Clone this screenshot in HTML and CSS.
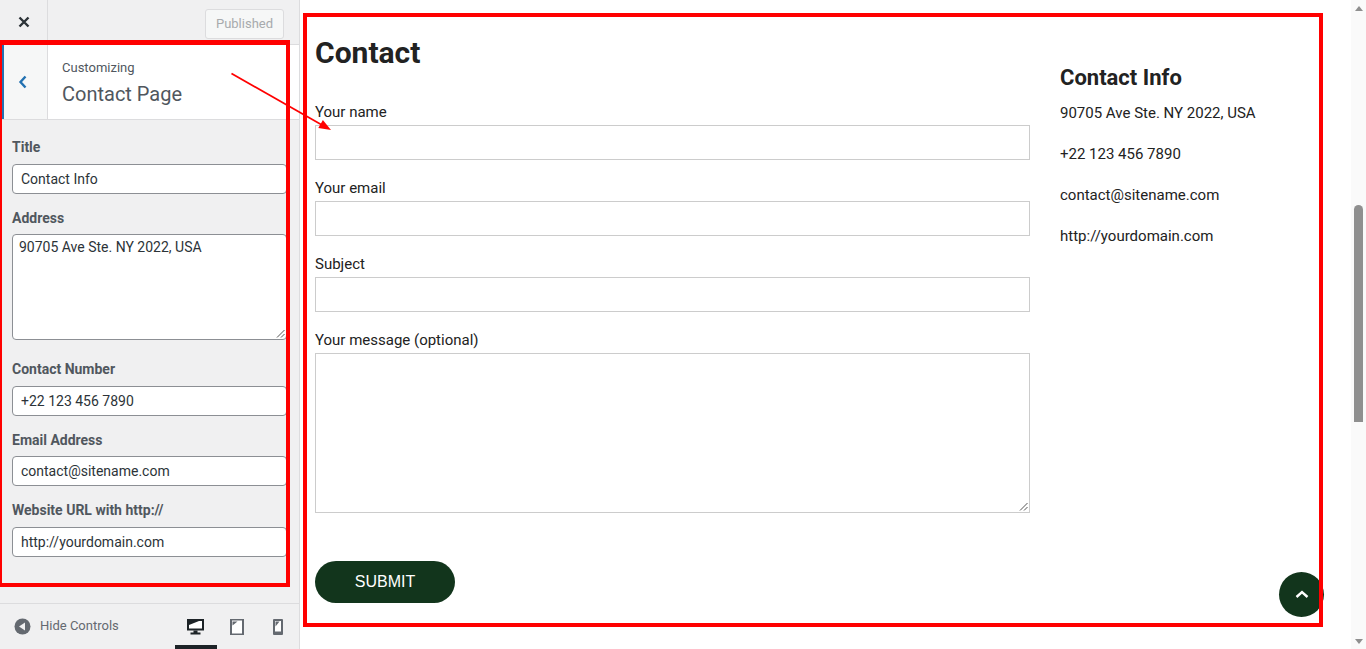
FILE: index.html
```html
<!DOCTYPE html>
<html lang="en">
<head>
<meta charset="utf-8">
<title>Customizing Contact Page</title>
<link rel="stylesheet" href="styles.css">
</head>
<body>
<div class="app">
  <aside class="side">
    <div class="topbar">
      <button class="close" aria-label="Close">
        <svg width="14" height="14" viewBox="0 0 14 14"><path d="M2.500 2.500l9 9M11.500 2.500l-9 9" stroke="#2c3338" stroke-width="2.400" fill="none"/></svg>
      </button>
      <div class="topbar-right"><span class="published">Published</span></div>
    </div>
    <div class="section-head">
      <div class="back">
        <svg width="10" height="16" viewBox="0 0 10 16"><path d="M7.500 2.500L2.500 8l5 5.500" stroke="#2271b1" stroke-width="2.400" fill="none"/></svg>
      </div>
      <div class="section-title">
        <span class="crumb">Customizing</span>
        <span class="page-name">Contact Page</span>
      </div>
    </div>
    <div class="fields">
      <label class="s-label l-title">Title</label>
      <div class="s-input">Contact Info</div>
      <label class="s-label l-address">Address</label>
      <div class="s-area">90705 Ave Ste. NY 2022, USA
        <svg class="grip" width="9" height="9" viewBox="0 0 9 9"><path d="M8.500 1L1 8.500M8.500 5L5 8.500" stroke="#555" stroke-width="1" fill="none"/></svg>
      </div>
      <label class="s-label l-number">Contact Number</label>
      <div class="s-input">+22 123 456 7890</div>
      <label class="s-label l-email">Email Address</label>
      <div class="s-input">contact@sitename.com</div>
      <label class="s-label l-url">Website URL with http://</label>
      <div class="s-input">http://yourdomain.com</div>
    </div>
    <div class="foot">
      <div class="hide">
        <svg width="17" height="17" viewBox="0 0 17 17"><circle cx="8.500" cy="8.500" r="8" fill="#646970"/><path d="M11 4.500v8L5 8.500z" fill="#f0f0f1"/></svg>
        <span class="hide-text">Hide Controls</span>
      </div>
      <div class="devices">
        <div class="device active">
          <svg class="monitor" width="17" height="16" viewBox="0 0 17 16"><rect width="17" height="11.500" fill="#1d2327"/><rect x="2" y="2" width="13" height="7.500" fill="#fff"/><path d="M2 2h10L2 6z" fill="#1d2327"/><path d="M6.500 11.500h4v2h3V15.500h-10V13.500h3z" fill="#1d2327"/></svg>
        </div>
        <div class="device">
          <svg width="14" height="16" viewBox="0 0 14 16"><rect width="14" height="16" fill="#646970"/><rect x="2" y="1.500" width="10" height="13" fill="#fff"/><path d="M2.500 2.500h5l-5 4z" fill="#646970"/></svg>
        </div>
        <div class="device">
          <svg width="10" height="16" viewBox="0 0 10 16"><rect width="10" height="16" rx="1" fill="#646970"/><rect x="2" y="2" width="6" height="10.500" fill="#fff"/><path d="M2.500 2.500h4l-4 5z" fill="#646970"/></svg>
        </div>
      </div>
    </div>
  </aside>
  <main class="main">
    <section class="form-col">
      <h1 class="heading">Contact</h1>
      <div class="m-label">Your name</div>
      <div class="m-input"></div>
      <div class="m-label">Your email</div>
      <div class="m-input"></div>
      <div class="m-label">Subject</div>
      <div class="m-input"></div>
      <div class="m-label">Your message (optional)</div>
      <div class="m-area">
        <svg class="grip" width="9" height="9" viewBox="0 0 9 9"><path d="M8.500 1L1 8.500M8.500 5L5 8.500" stroke="#555" stroke-width="1" fill="none"/></svg>
      </div>
      <button class="submit">SUBMIT</button>
    </section>
    <section class="info-col">
      <h2 class="info-title">Contact Info</h2>
      <p>90705 Ave Ste. NY 2022, USA</p>
      <p>+22 123 456 7890</p>
      <p>contact@sitename.com</p>
      <p>http://yourdomain.com</p>
    </section>
    <div class="scrollbar">
      <span class="arrow-up"></span>
      <div class="track"><div class="thumb"></div></div>
      <span class="arrow-down"></span>
    </div>
  </main>
</div>
<div class="to-top">
  <svg width="16" height="10" viewBox="0 0 16 10"><path d="M2.500 7L8 2l5.500 5" stroke="#fff" stroke-width="2.400" fill="none"/></svg>
</div>
<div class="mark mark-left"></div>
<div class="mark mark-right"></div>
<svg class="mark-arrow" width="1366" height="649" viewBox="0 0 1366 649">
  <path d="M231.500 73.500L322 125" stroke="#f00" stroke-width="1.700" fill="none"/>
  <path d="M331 130L318.300 127.900 322.900 120.100z" fill="#f00"/>
</svg>
</body>
</html>
```
FILE: styles.css
```css
* { box-sizing: border-box; }
html, body { margin: 0; height: 649px; overflow: hidden; background: #fff; }
body { font-family: Roboto, "Liberation Sans", sans-serif; color: #1d2327; }
.app { display: flex; height: 649px; }

.side {
  width: 300px; flex: none; height: 649px; display: flex; flex-direction: column;
  background: #f0f0f1; border-right: 1px solid #dcdcde;
}
.topbar { height: 45px; flex: none; display: flex; border-bottom: 1px solid #dcdcde; }
.close {
  width: 48px; border: 0; border-right: 1px solid #dcdcde; background: #f0f0f1;
  display: flex; align-items: center; justify-content: center; padding: 0;
}
.topbar-right { flex: 1; display: flex; justify-content: flex-end; padding: 9px 15px 0 0; }
.published {
  width: 79px; height: 30px; border: 1px solid #dcdcde; border-radius: 3px;
  background: #f6f7f7; color: #a7aaad; font-size: 13px; line-height: 27px; text-align: center;
}
.section-head {
  height: 75px; flex: none; display: flex; background: #fff; border-bottom: 1px solid #dcdcde;
}
.back {
  width: 46px; flex: none; margin-left: 2px; background: #f6f7f7;
  border-left: 2px solid #2271b1; border-right: 1px solid #dcdcde;
  display: flex; align-items: center; justify-content: center; padding-right: 5px;
}
.section-title { display: flex; flex-direction: column; padding: 15px 0 0 14px; }
.crumb { font-size: 13px; line-height: 16px; color: #50575e; }
.page-name { font-size: 20px; line-height: 26px; margin-top: 5px; color: #50575e; }

.fields { flex: 1; padding: 0 12px; display: flex; flex-direction: column; }
.s-label { display: block; font-size: 14px; font-weight: 700; line-height: 18px; color: #50575e; }
.l-title { margin-top: 18px; margin-bottom: 8px; }
.l-address { margin-top: 15px; margin-bottom: 7px; }
.l-number { margin-top: 20px; margin-bottom: 8px; }
.l-email { margin-top: 15px; margin-bottom: 7px; }
.l-url { margin-top: 15px; margin-bottom: 8px; }
.s-input, .s-area {
  width: 275px; background: #fff; border: 1px solid #8c8f94; border-radius: 4px;
  font-size: 14px; color: #2c3338;
}
.s-input { height: 30px; line-height: 28px; padding: 0 8px; flex: none; }
.s-area { height: 106px; flex: none; line-height: 22px; padding: 1px 6px; position: relative; }
.grip { position: absolute; right: 1px; bottom: 1px; }

.foot {
  height: 46px; flex: none; border-top: 1px solid #dcdcde; display: flex;
  justify-content: space-between; padding-left: 14px;
}
.hide { display: flex; align-items: center; gap: 9px; font-size: 13px; color: #646970; margin-top: -1px; }
.hide-text { margin-top: -2px; }
.devices { display: flex; margin-right: 1px; }
.device {
  width: 42px; height: 45px; display: flex; align-items: center; justify-content: center;
  margin-right: -1px; padding-top: 1px;
}
.device.active { box-shadow: inset 0 -4px 0 #1d2327; }
.monitor { margin-right: 1px; }

.main { flex: 1; display: flex; padding-left: 15px; position: relative; }
.form-col { width: 715px; flex: none; display: flex; flex-direction: column; align-items: flex-start; }
.heading { margin: 35px 0 0; font-size: 30px; font-weight: 700; line-height: 36px; color: #222; }
.m-label { font-size: 15px; line-height: 20px; color: #222; height: 23px; }
.heading + .m-label { margin-top: 31px; }
.m-input + .m-label { margin-top: 18px; }
.m-input { width: 715px; height: 35px; border: 1px solid #ccc; flex: none; }
.m-area { width: 715px; height: 160px; border: 1px solid #ccc; flex: none; position: relative; }
.submit {
  margin-top: 48px; width: 140px; height: 42px; border: 0; border-radius: 21px;
  background: #12351c; color: #fff; font-family: "Liberation Sans", Arial, sans-serif; font-size: 16px;
}
.info-col { margin-left: 30px; padding-top: 65px; font-size: 15px; color: #222; }
.info-title { margin: 0 0 12px; font-size: 22px; font-weight: 700; line-height: 26px; color: #222; }
.info-col p { margin: 0 0 21px; line-height: 20px; }

.scrollbar {
  position: absolute; right: 0; top: 0; width: 15px; height: 649px; background: #fafafa;
  display: flex; flex-direction: column; align-items: center;
}
.track { position: relative; flex: 1; width: 100%; }
.thumb { position: absolute; left: 3px; top: 190px; width: 9px; height: 217px; background: #8f8f8f; border-radius: 5px 5px 0 0; }
.arrow-up, .arrow-down { width: 0; height: 0; border-left: 4.500px solid transparent; border-right: 4.500px solid transparent; flex: none; }
.arrow-up { border-bottom: 5px solid #8f8f8f; margin: 6px 0 4px; }
.arrow-down { border-top: 5px solid #8f8f8f; margin: 4px 0 5px; }

.to-top {
  position: absolute; left: 1279px; top: 572px; width: 45px; height: 45px; border-radius: 50%;
  background: #12351c; display: flex; align-items: center; justify-content: center;
}
.mark { position: absolute; border: 4px solid #f00; pointer-events: none; }
.mark-left { left: -2px; top: 40px; width: 292px; height: 547px; border-top-width: 5px; }
.mark-right { left: 303px; top: 13px; width: 1020px; height: 614px; }
.mark-arrow { position: absolute; left: 0; top: 0; pointer-events: none; }
```
